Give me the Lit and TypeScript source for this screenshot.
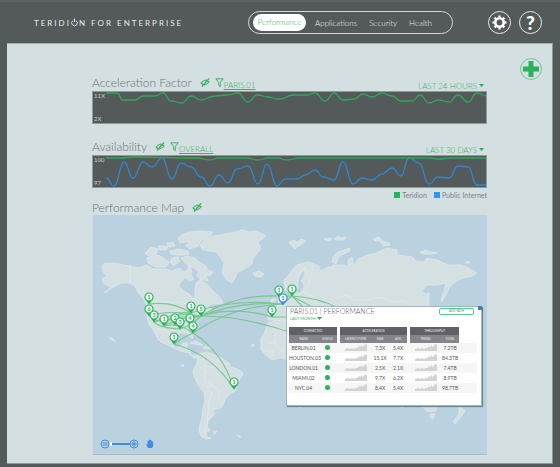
import { LitElement, html, svg, css } from "lit";
import { customElement, property } from "lit/decorators.js";

type Point = [number, number];

/* Joins points with curves that run level through every point. */
const smooth = (pts: Point[]) =>
  pts
    .map(([x, y], i) => {
      if (i === 0) return `M${x} ${y}`;
      const [px, py] = pts[i - 1];
      const mid = (px + x) / 2;
      return `C${mid} ${py} ${mid} ${y} ${x} ${y}`;
    })
    .join("");

const acceleration: Point[] = [
  [106, 93], [117, 93], [123, 100], [135, 100], [143, 96], [155, 96], [163, 93], [171, 101], [182, 103],
  [191, 96], [201, 100], [215, 96], [227, 95], [238, 93], [248, 102], [257, 95], [268, 97], [277, 99],
  [280, 99], [293, 95], [307, 95], [315, 93], [325, 101], [334, 93], [343, 100], [354, 99], [363, 94],
  [372, 97], [382, 93], [392, 96], [401, 101], [412, 101], [420, 95], [429, 103], [438, 100], [449, 102],
  [458, 95], [468, 102], [477, 93], [487, 96],
];

const teridion: Point[] = [
  [106, 158], [120, 158], [135, 157], [197, 158], [210, 160], [218, 158], [247, 158], [258, 160],
  [268, 158], [278, 158], [286, 160], [300, 158], [430, 158], [438, 159], [450, 158], [487, 158],
];

const internet: Point[] = [
  [106, 178], [114, 186], [124, 162], [133, 178], [143, 162], [152, 167], [162, 158], [172, 179],
  [181, 163], [191, 167], [201, 177], [210, 186], [219, 175], [228, 183], [237, 169], [248, 166],
  [258, 184], [267, 164], [277, 186], [285, 179], [297, 179], [305, 175], [315, 170], [323, 177],
  [334, 180], [343, 162], [353, 184], [362, 178], [372, 180], [382, 174], [392, 168], [401, 176],
  [409, 158], [419, 163], [429, 184], [438, 177], [449, 178], [458, 166], [468, 167], [477, 185], [487, 185],
];

const land = [
  // North and Central America
  "M102 266L105 263L113 263L120 264L130 266L138 268L147 265L153 269L165 269L172 271L180 268L184 272L188 270L189 264L192 272L190 277L185 278L180 283L179 287L184 291L189 294L193 299L195 295L195 288L196 283L201 279L204 283L207 284L213 291L219 296L223 303L217 304L211 304L206 308L211 308L211 311L205 313L200 317L197 322L195 326L191 331L193 338L190 337L188 333L180 333L173 336L171 343L175 348L180 347L183 343L188 343L186 349L190 351L191 355L197 356L199 354L202 355L198 357L194 358L188 353L180 351L172 347L163 343L160 337L156 330L158 337L162 343L158 339L152 328L149 324L147 317L148 309L144 300L140 294L136 287L131 283L122 283L115 286L105 293L104 293L111 287L104 284L102 279L107 276L103 272Z",
  // South America
  "M198 354L207 352L212 354L218 356L223 359L229 363L230 367L238 369L243 373L242 376L237 383L235 391L230 394L226 398L222 407L218 409L214 409L214 415L208 421L207 426L210 430L206 433L207 437L211 438L206 439L201 436L199 430L200 424L202 417L203 409L205 400L204 392L198 385L193 373L194 368L197 363Z",
  // Greenland and Iceland
  "M200 245L205 240L213 236L225 234L235 232L242 230L250 232L257 231L266 236L258 242L261 249L253 258L252 264L246 268L237 273L235 278L232 283L227 280L222 273L224 263L217 252L203 250Z",
  "M253 273L259 271L264 274L261 277L255 276Z",
  // Arctic islands
  "M178 238L183 234L190 232L200 231L213 232L210 236L201 241L198 246L190 249L186 246L190 241L180 243Z",
  "M181 258L187 256L195 258L199 262L205 265L208 270L213 272L210 276L206 275L208 281L203 280L197 276L199 271L192 267L185 263Z",
  "M147 258L152 256L158 255L163 258L169 262L166 267L155 267L148 263Z",
  "M145 253L151 247L158 249L156 254L149 256Z",
  "M158 246L168 246L166 250L160 250ZM167 243L173 242L175 246L169 247ZM170 251L178 249L188 251L189 254L178 255L171 254ZM172 258L178 257L180 261L174 266L170 262ZM186 278L191 275L194 279L190 281Z",
  // Eurasia down to the Mediterranean
  "M284 280L287 277L292 270L297 265L303 263L308 262L315 264L320 267L318 270L323 270L328 267L332 267L333 265L343 265L348 267L348 260L352 257L354 266L358 259L368 255L376 253L387 248L397 250L397 255L406 256L413 257L415 261L425 262L427 258L437 260L448 265L460 265L467 267L477 273L472 276L462 278L455 282L450 286L447 293L442 302L441 300L444 291L446 283L437 285L427 285L422 291L428 296L428 330L280 330L282 325L274 320L268 320L268 311L276 310L277 306L283 305L290 299L290 292L285 290Z",
  // Britain and Ireland
  "M276 294L280 293L282 300L284 305L277 306L279 301ZM271 300L275 298L275 303L271 304Z",
  // Africa
  "M268 323L275 321L284 320L300 325L300 359L288 359L280 358L272 360L266 355L261 350L261 338L265 332Z",
  // Northern seas
  "M289 242L294 240L297 243L301 239L306 241L300 245L295 249L291 245Z",
  "M332 262L333 257L338 252L350 248L350 251L341 255L338 259L336 264Z",
  "M373 239L379 237L382 241L389 243L390 245L383 246L380 241L375 241Z",
  "M420 252L426 250L430 252L437 253L432 254L424 254ZM324 239L331 238L331 240L326 241ZM334 239L338 236L341 238L346 237L344 240L337 240ZM465 262L469 261L470 263L466 263Z",
  "M427 293L429 293L429 307L427 307Z",
  // Southern lands
  "M420 405L437 405L436 411L427 412L424 408ZM430 414L435 414L433 419L430 417Z",
  "M459 406L465 411L461 417L455 424L453 422L459 414ZM297 405L304 405L300 408ZM399 405L406 405L402 408Z",
  // Caribbean and Hawaii
  "M190 343L196 341L203 345L199 345ZM203 347L210 346L212 349L205 349ZM251 345L254 344L253 347ZM109 338L112 338L115 341L112 340ZM213 432L217 431L215 434ZM237 435L241 437L239 437ZM181 365L184 365L183 367Z",
];

const borders =
  "M130 266V285M135 287L140 295M149 302H182L188 305L194 308L203 304L207 308M153 328L165 330L172 338M203 357L205 366L213 368L217 361L228 364M198 366L206 370L204 380L212 385L220 391L218 398L222 403M205 392L212 392L209 403L207 424L204 433M212 385L206 388M298 285L299 275L305 267M305 267L308 276M314 266L311 275L309 285L303 292L312 296L316 304M303 292L296 296L300 307M335 299L345 295L355 300L367 300L380 297L392 302L405 300L412 307M268 343L275 343L275 335L283 328M275 343L283 352M265 351L273 351L273 358M283 328L288 345";

const routes = [
  "M149 304Q174 301 191 313", "M149 316Q160 311 191 313", "M154 322Q175 311 201 316", "M164 326Q175 311 191 313",
  "M164 326Q178 322 193 333", "M154 322Q160 328 180 329", "M164 326Q180 317 201 316", "M180 329L190 325L201 316",
  "M180 329Q185 320 191 313", "M201 316Q193 322 193 333", "M174 344Q182 338 193 333", "M174 344Q212 354 234 389",
  "M193 333Q223 352 234 389", "M201 316Q235 294 279 296", "M191 313Q235 298 283 304", "M201 316Q238 301 283 304",
  "M193 333Q232 306 283 304", "M175 325Q225 302 272 317", "M154 322Q215 306 292 333", "M272 317H292",
  "M292 296L283 304", "M279 296L292 296", "M292 296L304 308", "M292 296L314 308", "M292 296Q320 298 338 308",
];

const pins: { x: number; y: number; n: number; here?: boolean }[] = [
  { x: 149, y: 297, n: 1 }, { x: 149, y: 309, n: 6 }, { x: 154, y: 315, n: 3 }, { x: 164, y: 319, n: 1 },
  { x: 175, y: 318, n: 2 }, { x: 180, y: 322, n: 3 }, { x: 190, y: 318, n: 4 }, { x: 193, y: 326, n: 4 },
  { x: 191, y: 306, n: 1 }, { x: 201, y: 309, n: 5 }, { x: 174, y: 337, n: 1 }, { x: 234, y: 382, n: 1 },
  { x: 279, y: 290, n: 1 }, { x: 292, y: 289, n: 1 }, { x: 272, y: 310, n: 1 }, { x: 283, y: 298, n: 1, here: true },
];

const rows = [
  ["BERLIN.01", "7.3X", "5.4X", "7.2TB"],
  ["HOUSTON.03", "15.1X", "7.7X", "84.3TB"],
  ["LONDON.01", "2.5X", "2.1X", "7.4TB"],
  ["MIAMI.02", "9.7X", "6.2X", "8.9TB"],
  ["NYC.04", "8.4X", "5.4X", "98.7TB"],
];

const hiddenIcon = svg`<svg class="eye" viewBox="0 0 10 9"><path d="M1 5Q5 0 9 4Q5 9 1 5Z"/><path d="M2 8.500L9 .5M4 6L6 3.500"/></svg>`;
const funnelIcon = svg`<svg class="funnel" viewBox="0 0 9 9"><path d="M.8 .8H8.200L5.300 4.500V8.500L3.700 7.500V4.500Z"/></svg>`;
const arrowIcon = svg`<svg class="arrow" viewBox="0 0 5 3"><path d="M0 0H5L2.500 3Z"/></svg>`;
const spark = svg`<svg class="spark" viewBox="0 0 22 7"><path d="M0 7V5L3 4L5 5L7 4L9 5L11 4L13 4V2L15 3L17 1V3L19 2L20 0L22 1V7Z"/></svg>`;

@customElement("range-select")
export class RangeSelect extends LitElement {
  @property() name = "";
  @property({ type: Array }) options: string[] = [];
  static styles = css`
    :host { display: flex; align-items: center; gap: 2px; color: #34b260; }
    select {
      appearance: none; border: 0; padding: 0; margin: 0; background: none; color: inherit;
      font: inherit; text-align-last: right; field-sizing: content; outline-offset: 1px;
    }
    svg { width: 5px; height: 3px; fill: #27ae54; pointer-events: none; }
  `;
  render() {
    return html`<select aria-label=${this.name}>${this.options.map((o) => html`<option>${o}</option>`)}</select>${arrowIcon}`;
  }
}

@customElement("app-root")
export class AppRoot extends LitElement {
  static styles = css`
    :host {
      display: block; box-sizing: border-box; min-height: 100vh; padding: 0 7px 4px;
      background: #545a5a; border-top: 2px solid #5d6464;
      font-family: Lato, "Open Sans", sans-serif; font-size: 8px; line-height: 10px; color: #7c8486;
    }
    * { box-sizing: border-box; }
    button { font: inherit; padding: 0; margin: 0; cursor: pointer; }
    svg { display: block; }
    h1, h2, h3 { margin: 0; font-weight: 300; }

    header { display: flex; align-items: center; height: 41px; padding: 0 11px 0 27px; }
    h1 { display: flex; align-items: center; font-size: 8px; line-height: 12px; font-weight: 400; letter-spacing: 2px; color: #e6eaea; white-space: pre; }
    .power { width: 7px; height: 9px; margin-right: 1px; fill: none; stroke: #e6eaea; stroke-width: 1; }
    nav { display: flex; align-items: center; gap: 12px; width: 205px; height: 23px; margin-left: auto; padding: 0 4px; border: 1px solid #d3d7d7; border-radius: 12px; font-weight: 300; }
    nav a { color: #eef1f1; text-decoration: none; }
    nav a.on { width: 53px; line-height: 17px; margin-right: -3px; border-radius: 9px; background: #fff; color: #27ae54; text-align: center; }
    .tools { display: flex; gap: 8px; margin-left: 35px; }
    .round { display: grid; place-items: center; width: 23px; height: 23px; border: 1px solid #e6eaea; border-radius: 50%; background: none; color: #fff; }
    .round svg { width: 17px; height: 17px; }
    .help { font-size: 19px; line-height: 20px; font-weight: 900; }
    .gear { fill: none; stroke: #fff; }

    main {
      display: grid; grid-template-columns: minmax(0, 1fr) 22px; gap: 33px; align-items: start;
      padding: 30px 11px 9px 85px; background: #d4dfe1; border-top: 1px solid #a3abac;
      box-shadow: inset -1px -1px 0 #8f9899;
    }
    .add { width: 22px; height: 22px; margin-top: -16px; border: 1px solid #6ecb8d; border-radius: 50%; background: none; display: grid; place-items: center; }
    .add svg { width: 18px; height: 18px; fill: #27b45a; }

    .bar { display: flex; align-items: center; height: 17px; color: #34b260; font-weight: 300; }
    .bar h2 { font-size: 12px; line-height: 16px; font-weight: 300; color: #6b7476; margin-right: 8px; }
    .bar range-select { margin-left: auto; padding: 6px 3px 0 0; }
    .bar a { color: inherit; margin-top: 5px; text-underline-offset: 1px; }
    .icon { border: 0; background: none; }
    .eye { width: 10px; height: 9px; fill: none; stroke: #3ab566; stroke-width: 1.2; }
    .funnel { width: 9px; height: 9px; margin-left: 5px; fill: none; stroke: #3ab566; stroke-width: 1; }

    .chart { display: flex; height: 33px; margin-bottom: 14px; background: #545a5a; border: 1px solid #919a9a; }
    .chart.tight { margin-bottom: 0; }
    .scale { display: flex; flex-direction: column; justify-content: space-between; width: 13px; padding: 0 0 0 1px; font-size: 6px; line-height: 8px; color: #c9cecf; }
    .chart svg { flex: 1; min-width: 0; height: 31px; fill: none; stroke-width: 1.3; }
    .good { stroke: #2fa85a; }
    .net { stroke: #2f86cf; }

    .legend { display: flex; justify-content: flex-end; gap: 7px; margin: 2px 0 0; padding: 0; list-style: none; font-size: 7px; line-height: 10px; }
    .legend li { display: flex; align-items: center; gap: 2px; }
    .chip { width: 6px; height: 6px; background: #27b45a; }
    .chip.blue { background: #2e97f2; }
    .bar.low { height: 15px; }

    .map { position: relative; margin-left: 1px; border-bottom: 1px solid #a9bcc6; background: #bad2e0; }
    .world { width: 100%; }
    .land { fill: #d5e0e2; stroke: #e2e9ea; stroke-width: .7; stroke-linejoin: round; }
    .water { fill: #bad2e0; stroke: #e2e9ea; stroke-width: .5; }
    .borders { fill: none; stroke: #e4ebec; stroke-width: .7; }
    .routes { fill: none; stroke: #6cc483; stroke-width: 1.1; opacity: .85; }
    .pin { fill: #27b45a; }
    .pin circle { fill: #fff; stroke: #27b45a; stroke-width: 1.2; }
    .pin text { font-size: 6px; font-weight: 700; text-anchor: middle; }
    .pin.here { fill: #3b8de6; }
    .pin.here circle { stroke: #3b8de6; }

    .zoom { position: absolute; left: 7px; bottom: 5px; display: flex; align-items: center; color: #438ee0; }
    .zoom svg { width: 10px; height: 10px; fill: none; stroke: #438ee0; stroke-width: 1; }
    .zoom .hand { margin-left: 6px; fill: #438ee0; stroke: none; }
    input { appearance: none; width: 20px; height: 10px; margin: 0 -1px 0 0; background: linear-gradient(#438ee0, #438ee0) center / 100% 2px no-repeat; }
    input::-webkit-slider-thumb { appearance: none; width: 2px; height: 4px; background: #fff; }

    .card { position: absolute; left: 49%; right: 5px; top: 38%; padding: 0 4px 12px 2px; background: #fff; border: 1px solid #9fb4c4; box-shadow: 1px 1px 1px #6f8599; }
    .card-top { display: flex; justify-content: space-between; padding: 0 3px 0 1px; height: 20px; }
    h3 { font-size: 7px; line-height: 9px; color: #555; }
    .card range-select { font-size: 4px; line-height: 5px; gap: 1px; }
    .path { width: 35px; height: 7px; margin-top: 1px; border: 1px solid #5cc780; border-radius: 2px; background: #fff; color: #777; font-size: 3px; line-height: 4px; }
    .close { position: absolute; top: -1px; right: -1px; width: 4px; height: 4px; border: 0; background: #3b7fb5; }
    table { width: 100%; table-layout: fixed; border-collapse: collapse; font-size: 5px; line-height: 6px; color: #555; text-align: center; }
    th, td { padding: 0; font-weight: 400; }
    thead { font-size: 3px; line-height: 4px; color: #eee; }
    thead tr { height: 8px; }
    thead th { background: #84858a; }
    thead .group th { background: #606167; }
    tbody tr { height: 10px; }
    tbody tr:nth-child(odd) { background: #f6f6f5; }
    .name { width: 29px; } .status { width: 19px; } .gap { width: 3px; } .trend { width: 31px; } .num { width: 18px; } .end { width: 18px; }
    .dot { width: 5px; height: 5px; margin: 0 auto; border-radius: 50%; background: #27b45a; }
    .spark { width: 22px; height: 7px; margin: 0 auto; fill: #d2d3d4; }
  `;

  render() {
    return html`
      <header>
        <h1>TERIDI<svg class="power" viewBox="0 0 7 9"><path d="M1.800 2.700A2.800 2.800 0 1 0 5.200 2.700M3.500 .5V4"/></svg>N FOR ENTERPRISE</h1>
        <nav>
          <a class="on" href="#performance">Performance</a>
          <a href="#applications">Applications</a>
          <a href="#security">Security</a>
          <a href="#health">Health</a>
        </nav>
        <div class="tools">
          <button class="round" aria-label="Settings">
            <svg class="gear" viewBox="0 0 17 17">
              <circle cx="8.500" cy="8.500" r="4.200" stroke-width="2.600"/>
              <circle cx="8.500" cy="8.500" r="6" stroke-width="2" pathLength="16" stroke-dasharray="1 1" stroke-dashoffset=".5"/>
            </svg>
          </button>
          <button class="round help">?</button>
        </div>
      </header>
      <main>
        <div>
          <section>
            <div class="bar">
              <h2>Acceleration Factor</h2>
              <button class="icon" aria-label="Hide acceleration factor">${hiddenIcon}</button>
              ${funnelIcon}<a href="#filter">PARIS.01</a>
              <range-select name="Acceleration period" .options=${["LAST 24 HOURS", "LAST 30 DAYS"]}></range-select>
            </div>
            <div class="chart">
              <div class="scale"><span>11X</span><span>2X</span></div>
              <svg viewBox="106 92 380 31" preserveAspectRatio="none"><path class="good" d=${smooth(acceleration)}/></svg>
            </div>
          </section>
          <section>
            <div class="bar">
              <h2>Availability</h2>
              <button class="icon" aria-label="Hide availability">${hiddenIcon}</button>
              ${funnelIcon}<a href="#filter">OVERALL</a>
              <range-select name="Availability period" .options=${["LAST 30 DAYS", "LAST 24 HOURS"]}></range-select>
            </div>
            <div class="chart tight">
              <div class="scale"><span>100</span><span>97</span></div>
              <svg viewBox="106 156 380 31" preserveAspectRatio="none">
                <path class="net" d=${smooth(internet)}/><path class="good" d=${smooth(teridion)}/>
              </svg>
            </div>
            <ul class="legend">
              <li><span class="chip"></span>Teridion</li>
              <li><span class="chip blue"></span>Public Internet</li>
            </ul>
          </section>
          <section>
            <div class="bar low">
              <h2>Performance Map</h2>
              <button class="icon" aria-label="Hide performance map">${hiddenIcon}</button>
            </div>
            <div class="map">
              <svg class="world" viewBox="93 215 394 239">
                ${land.map((d) => svg`<path class="land" d=${d}/>`)}
                <path class="water" d="M304 270L299 276L297 283L298 288L294 292L299 293L303 290L304 284L301 281L305 275Z"/>
                <path class="borders" d=${borders}/>
                <g class="routes">${routes.map((d) => svg`<path d=${d}/>`)}</g>
                ${pins.map(
                  (p) => svg`<g class=${p.here ? "pin here" : "pin"} transform="translate(${p.x} ${p.y})">
                    <path d="M-4 2L0 7.500L4 2Z"/><circle r="4"/><text y="2">${p.n}</text></g>`
                )}
              </svg>
              <div class="zoom">
                <button class="icon" aria-label="Zoom out"><svg viewBox="0 0 10 10"><circle cx="5" cy="5" r="4"/><path d="M2.500 4H7.500M2.500 6H7.500"/></svg></button>
                <input type="range" aria-label="Zoom level" min="0" max="10" value="0">
                <button class="icon" aria-label="Zoom in"><svg viewBox="0 0 10 10"><circle cx="5" cy="5" r="4"/><path d="M2 5H8M5 2V8M3.500 3.500L6.500 6.500M6.500 3.500L3.500 6.500"/></svg></button>
                <button class="icon" aria-label="Pan"><svg class="hand" viewBox="0 0 10 10"><path d="M3 9L1 5.500Q1 4.500 2.500 5.500V2Q3.200 1 3.800 2V1Q4.600 0 5.300 1V1.200Q6.200 .5 6.800 1.500V2.500Q7.800 2 8.200 3V7L7 9Z"/></svg></button>
              </div>
              <div class="card">
                <button class="close" aria-label="Close"></button>
                <div class="card-top">
                  <div>
                    <h3>PARIS.01 | PERFORMANCE</h3>
                    <range-select name="Card period" .options=${["LAST MONTH"]}></range-select>
                  </div>
                  <button class="path">ADD PATH</button>
                </div>
                <table>
                  <colgroup>
                    <col class="name"><col class="status"><col class="gap"><col class="trend"><col class="num"><col class="num">
                    <col class="gap"><col class="trend"><col class="num"><col class="end">
                  </colgroup>
                  <thead>
                    <tr class="group"><th colspan="2">CONNECTED</th><td></td><th colspan="3">ACCELERATION</th><td></td><th colspan="2">THROUGHPUT</th><td></td></tr>
                    <tr><th>NAME</th><th>STATUS</th><td></td><th>LATENCY/TIME</th><th>MAX</th><th>AVG</th><td></td><th>TREND</th><th>TOTAL</th><td></td></tr>
                  </thead>
                  <tbody>
                    ${rows.map(
                      ([name, max, avg, total]) => html`<tr>
                        <td>${name}</td><td><div class="dot"></div></td><td></td><td>${spark}</td><td>${max}</td><td>${avg}</td>
                        <td></td><td>${spark}</td><td>${total}</td><td></td></tr>`
                    )}
                  </tbody>
                </table>
              </div>
            </div>
          </section>
        </div>
        <button class="add" aria-label="Add widget"><svg viewBox="0 0 18 18"><path d="M6.500 1H11.500V6.500H17V11.500H11.500V17H6.500V11.500H1V6.500H6.500Z"/></svg></button>
      </main>
    `;
  }
}
